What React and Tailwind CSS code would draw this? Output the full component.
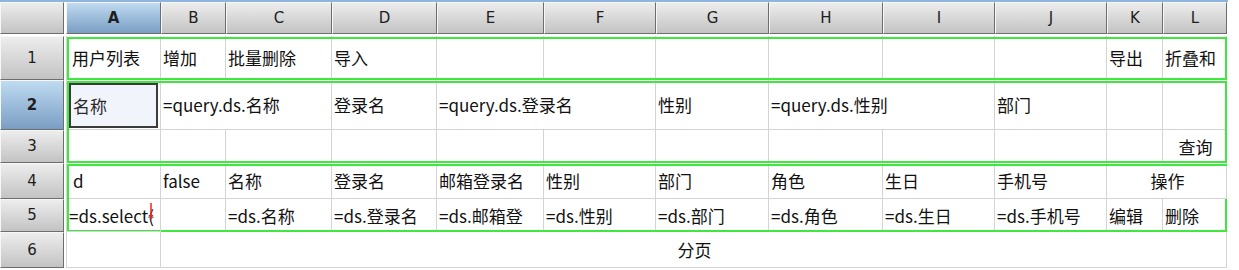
import React from 'react'
import clsx from 'clsx'

const LETTERS = ['A', 'B', 'C', 'D', 'E', 'F', 'G', 'H', 'I', 'J', 'K', 'L']

const ROW = ['row-start-1', 'row-start-2', 'row-start-3', 'row-start-4', 'row-start-5', 'row-start-6', 'row-start-7']
const COL = ['col-start-1', 'col-start-2', 'col-start-3', 'col-start-4', 'col-start-5', 'col-start-6', 'col-start-7', 'col-start-8', 'col-start-9', 'col-start-10', 'col-start-11', 'col-start-12', 'col-start-13']
const SPAN = { 1: 'col-span-1', 2: 'col-span-2', 11: 'col-span-11', 12: 'col-span-12' }

// [row, col, span, text, extra classes]
const cells = [
    [1, 1, 1, '用户列表', 'pl-[5px]'],
    [1, 2, 1, '增加'],
    [1, 3, 1, '批量删除'],
    [1, 4, 1, '导入'],
    [1, 5, 1, ''],
    [1, 6, 1, ''],
    [1, 7, 1, ''],
    [1, 8, 1, ''],
    [1, 9, 1, ''],
    [1, 10, 1, ''],
    [1, 11, 1, '导出'],
    [1, 12, 1, '折叠和', 'pl-0'],

    [2, 2, 2, '=query.ds.名称'],
    [2, 4, 1, '登录名'],
    [2, 5, 2, '=query.ds.登录名'],
    [2, 7, 1, '性别'],
    [2, 8, 2, '=query.ds.性别'],
    [2, 10, 1, '部门'],
    [2, 11, 1, ''],
    [2, 12, 1, ''],

    [3, 1, 1, ''],
    [3, 2, 1, ''],
    [3, 3, 1, ''],
    [3, 4, 1, ''],
    [3, 5, 1, ''],
    [3, 6, 1, ''],
    [3, 7, 1, ''],
    [3, 8, 1, ''],
    [3, 9, 1, ''],
    [3, 10, 1, ''],
    [3, 11, 1, ''],
    [3, 12, 1, '查询', 'justify-center'],

    [4, 1, 1, 'd', 'pl-[6px]'],
    [4, 2, 1, 'false'],
    [4, 3, 1, '名称'],
    [4, 4, 1, '登录名'],
    [4, 5, 1, '邮箱登录名'],
    [4, 6, 1, '性别'],
    [4, 7, 1, '部门'],
    [4, 8, 1, '角色'],
    [4, 9, 1, '生日'],
    [4, 10, 1, '手机号'],
    [4, 11, 2, '操作', 'justify-center'],

    [5, 1, 1, '=ds.select(', 'relative overflow-hidden'],
    [5, 2, 1, ''],
    [5, 3, 1, '=ds.名称'],
    [5, 4, 1, '=ds.登录名'],
    [5, 5, 1, '=ds.邮箱登', 'overflow-hidden'],
    [5, 6, 1, '=ds.性别'],
    [5, 7, 1, '=ds.部门'],
    [5, 8, 1, '=ds.角色'],
    [5, 9, 1, '=ds.生日'],
    [5, 10, 1, '=ds.手机号'],
    [5, 11, 1, '编辑'],
    [5, 12, 1, '删除'],

    [6, 1, 1, ''],
    [6, 2, 11, '分页', 'justify-center'],
]

const headBase = 'h-full flex items-center justify-center border-r border-b border-[#6d6d6d] border-l border-t border-l-[#f7f7f7] border-t-[#f7f7f7] text-[15px] text-[#1e1e1e]'
const grayBg = 'bg-linear-to-b from-[#ededed] to-[#c3c3c3]'
const blueBg = 'bg-linear-to-b from-[#c0dbf2] to-[#7a9ec3] font-bold'

const Cursor = () => (
    <svg className='absolute right-[3px] top-[3px]' width='12' height='20' viewBox='0 0 12 20'>
        <path d='M3 15 Q6 17 9 15' stroke='#30c8c8' strokeWidth='1.5' fill='none' />
        <line x1='6' y1='1' x2='6' y2='14' stroke='#ee2222' strokeWidth='1.5' />
        <path d='M3.5 13 L8.5 13 L6 18 Z' fill='#ee2222' />
    </svg>
)

const App = () => {
    return (
        <div className='w-[1239px] h-[270px] bg-white overflow-hidden'>
            <div className="w-[1228px] border-t-2 border-[#8fb4df] grid grid-cols-[66px_95px_65px_106px_105px_107px_112px_113px_114px_112px_112px_56px_64px] grid-rows-[34px_44px_50px_33px_36px_33px_36px] font-['Noto_Sans_CJK_SC','Noto_Sans',sans-serif] text-[17px] leading-none text-[#111]">

                {/* corner */}
                <div className='row-start-1 col-start-1 pr-[2px] pb-[2px]'>
                    <div className={clsx(headBase, grayBg)}></div>
                </div>

                {/* column letters */}
                {LETTERS.map((l, i) => (
                    <div key={l} className={clsx(ROW[0], COL[i + 1], 'pb-[2px]')}>
                        <div className={clsx(headBase, "font-['DejaVu_Sans',sans-serif]", i === 0 ? blueBg : grayBg)}>{l}</div>
                    </div>
                ))}

                {/* row numbers */}
                {[1, 2, 3, 4, 5, 6].map(n => (
                    <div key={n} className={clsx(ROW[n], COL[0], 'pr-[2px]')}>
                        <div className={clsx(headBase, "font-['DejaVu_Sans',sans-serif]", n === 2 ? blueBg : grayBg)}>{n}</div>
                    </div>
                ))}

                {/* selected cell A2 */}
                <div className={clsx(ROW[2], COL[1], 'border-l border-r border-b border-[#d4d4d4] pt-[3px] pl-[2px] pr-[2px] pb-[1px]')}>
                    <div className='h-full flex items-center border-2 border-[#3b3b3b] bg-[#f1f5fb] pl-[2px] text-[#2a2a2a]'>名称</div>
                </div>

                {cells.map(([r, c, span, text, extra]) => (
                    <div
                        key={`${r}-${c}`}
                        className={clsx(ROW[r], COL[c], SPAN[span], 'flex items-center whitespace-nowrap border-r border-b border-[#d4d4d4] pl-[2px]', c === 1 && 'border-l', extra)}
                    >
                        {text}
                        {r === 5 && c === 1 && <Cursor />}
                    </div>
                ))}

                {/* green range frames */}
                <div className={clsx(ROW[1], COL[1], 'col-span-12 ml-px mt-px border-2 border-[#3fe83f] pointer-events-none')}></div>
                <div className={clsx(ROW[2], COL[1], 'col-span-12 row-span-2 ml-px mt-px border-2 border-[#3fe83f] pointer-events-none')}></div>
                <div className={clsx(ROW[4], COL[1], 'col-span-12 row-span-2 ml-px mt-px border-l-2 border-t-2 border-b-2 border-[#3fe83f] pointer-events-none')}></div>
                <div className={clsx(ROW[5], COL[12], 'border-r-2 border-[#3fe83f] pointer-events-none')}></div>
            </div>
        </div>
    )
}

export default App
